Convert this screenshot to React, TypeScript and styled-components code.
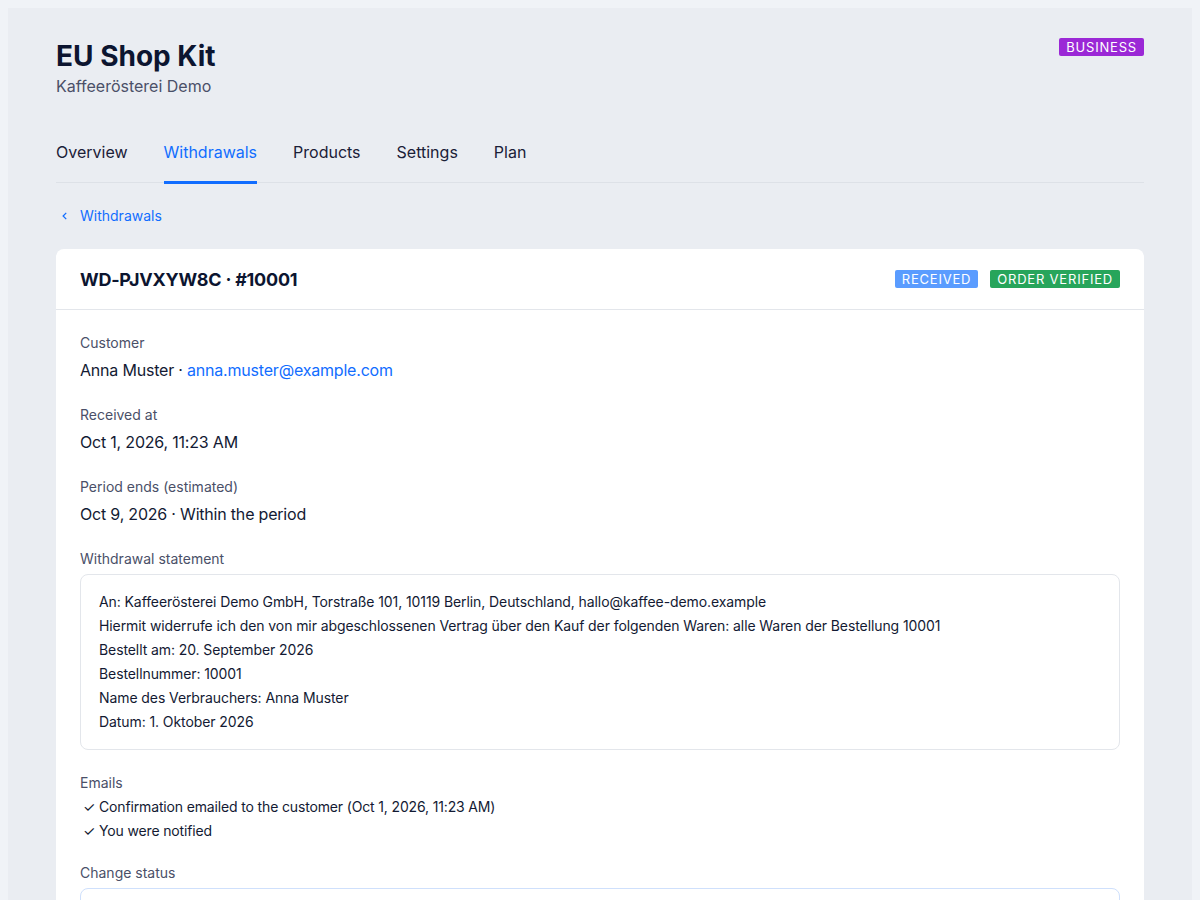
import styled, { createGlobalStyle } from 'styled-components';

const GlobalStyle = createGlobalStyle`
  body {
    margin: 8px;
    background: #f0f3f7;
    font-family: Inter, "Noto Sans", "Liberation Sans", sans-serif;
    color: #131a33;
  }
`;

// 탭 목록.
const tabs = ['Overview', 'Withdrawals', 'Products', 'Settings', 'Plan'];

const statementLines = [
  'An: Kaffeerösterei Demo GmbH, Torstraße 101, 10119 Berlin, Deutschland, hallo@kaffee-demo.example',
  'Hiermit widerrufe ich den von mir abgeschlossenen Vertrag über den Kauf der folgenden Waren: alle Waren der Bestellung 10001',
  'Bestellt am: 20. September 2026',
  'Bestellnummer: 10001',
  'Name des Verbrauchers: Anna Muster',
  'Datum: 1. Oktober 2026',
];

const App = () => {
  return (
    <>
      <GlobalStyle />
      <Page>
        <Header>
          <div>
            <Title>EU Shop Kit</Title>
            <Subtitle>Kaffeerösterei Demo</Subtitle>
          </div>
          <Badge color="#9b28d6">Business</Badge>
        </Header>

        <TabBar>
          {tabs.map(tab => (
            <Tab key={tab} active={tab === 'Withdrawals'}>{tab}</Tab>
          ))}
        </TabBar>

        <BackLink>
          <Chevron viewBox="0 0 8 8">
            <path d="M5 1.5 L2.5 4 L5 6.5" />
          </Chevron>
          Withdrawals
        </BackLink>

        <Card>
          <CardHeader>
            <CardTitle>WD-PJVXYW8C · #10001</CardTitle>
            <BadgeRow>
              <Badge color="#5a9cff">Received</Badge>
              <Badge color="#27a55b">Order verified</Badge>
            </BadgeRow>
          </CardHeader>

          <CardBody>
            <Field>
              <Label>Customer</Label>
              <Value>Anna Muster · <Link>anna.muster@example.com</Link></Value>
            </Field>
            <Field>
              <Label>Received at</Label>
              <Value>Oct 1, 2026, 11:23 AM</Value>
            </Field>
            <Field>
              <Label>Period ends (estimated)</Label>
              <Value>Oct 9, 2026 · Within the period</Value>
            </Field>
            <Field>
              <Label>Withdrawal statement</Label>
              <Statement>
                {statementLines.map(line => (
                  <div key={line}>{line}</div>
                ))}
              </Statement>
            </Field>
            <Field>
              <Label>Emails</Label>
              <CheckList>
                <li>✓ Confirmation emailed to the customer (Oct 1, 2026, 11:23 AM)</li>
                <li>✓ You were notified</li>
              </CheckList>
            </Field>
            <Field>
              <Label>Change status</Label>
              <StatusSelect />
            </Field>
          </CardBody>
        </Card>
      </Page>
    </>
  );
}

export default App;

const Page = styled.div`
  background: #eaedf2;
  padding: 30px 48px 48px;
`;

const Header = styled.div`
  display: flex;
  justify-content: space-between;
  align-items: flex-start;
`;

const Title = styled.h1`
  margin: 0;
  font-size: 28px;
  line-height: 36px;
  font-weight: 700;
  color: #0c1530;
`;

const Subtitle = styled.div`
  margin-top: 2px;
  font-size: 16px;
  line-height: 20px;
  color: #4a5068;
`;

const Badge = styled.span<{ color: string }>`
  display: inline-flex;
  align-items: center;
  height: 18px;
  padding: 0 7px;
  border-radius: 2px;
  background: ${(props) => props.color};
  color: #fff;
  font-size: 13px;
  text-transform: uppercase;
  letter-spacing: 0.8px;
`;

const TabBar = styled.div`
  display: flex;
  gap: 36px;
  margin-top: 37px;
  border-bottom: 1px solid #dde1e7;
`;

const Tab = styled.div<{ active: boolean }>`
  padding: 7px 0 17px;
  font-size: 16px;
  line-height: 24px;
  color: ${(props) => (props.active ? '#116dff' : '#1a2038')};
  border-bottom: 3px solid ${(props) => (props.active ? '#116dff' : 'transparent')};
  margin-bottom: -2px;
`;

const BackLink = styled.div`
  display: flex;
  align-items: center;
  gap: 10px;
  margin-top: 23px;
  padding-left: 4px;
  font-size: 14px;
  line-height: 20px;
  color: #116dff;
`;

const Chevron = styled.svg`
  width: 10px;
  height: 10px;
  fill: none;
  stroke: #116dff;
  stroke-width: 1;
`;

const Card = styled.div`
  margin-top: 23px;
  background: #fff;
  border-radius: 8px;
`;

const CardHeader = styled.div`
  display: flex;
  justify-content: space-between;
  align-items: center;
  height: 60px;
  padding: 0 24px;
  border-bottom: 1px solid #e3e6eb;
`;

const CardTitle = styled.div`
  font-size: 18px;
  font-weight: 700;
  letter-spacing: -0.25px;
  color: #0c1530;
`;

const BadgeRow = styled.div`
  display: flex;
  gap: 12px;
`;

const CardBody = styled.div`
  display: flex;
  flex-direction: column;
  gap: 23px;
  padding: 23px 24px 40px;
`;

const Field = styled.div`
  display: flex;
  flex-direction: column;
  gap: 5px;
`;

const Label = styled.div`
  font-size: 14px;
  line-height: 20px;
  color: #4a5068;
`;

const Value = styled.div`
  font-size: 16px;
  line-height: 24px;
  letter-spacing: -0.2px;
  color: #131a33;
`;

const Link = styled.span`
  color: #116dff;
`;

const Statement = styled.div`
  padding: 15px 18px;
  border: 1px solid #e3e6eb;
  border-radius: 8px;
  font-size: 14px;
  line-height: 24px;
  letter-spacing: -0.09px;
  color: #131a33;
`;

const CheckList = styled.ul`
  margin: -3px 0 -3px;
  padding: 0 0 0 3px;
  list-style: none;
  font-size: 14px;
  line-height: 24px;
  letter-spacing: -0.15px;
  color: #131a33;
`;

const StatusSelect = styled.div`
  height: 36px;
  border: 1px solid #cfe0fc;
  border-radius: 8px;
`;
